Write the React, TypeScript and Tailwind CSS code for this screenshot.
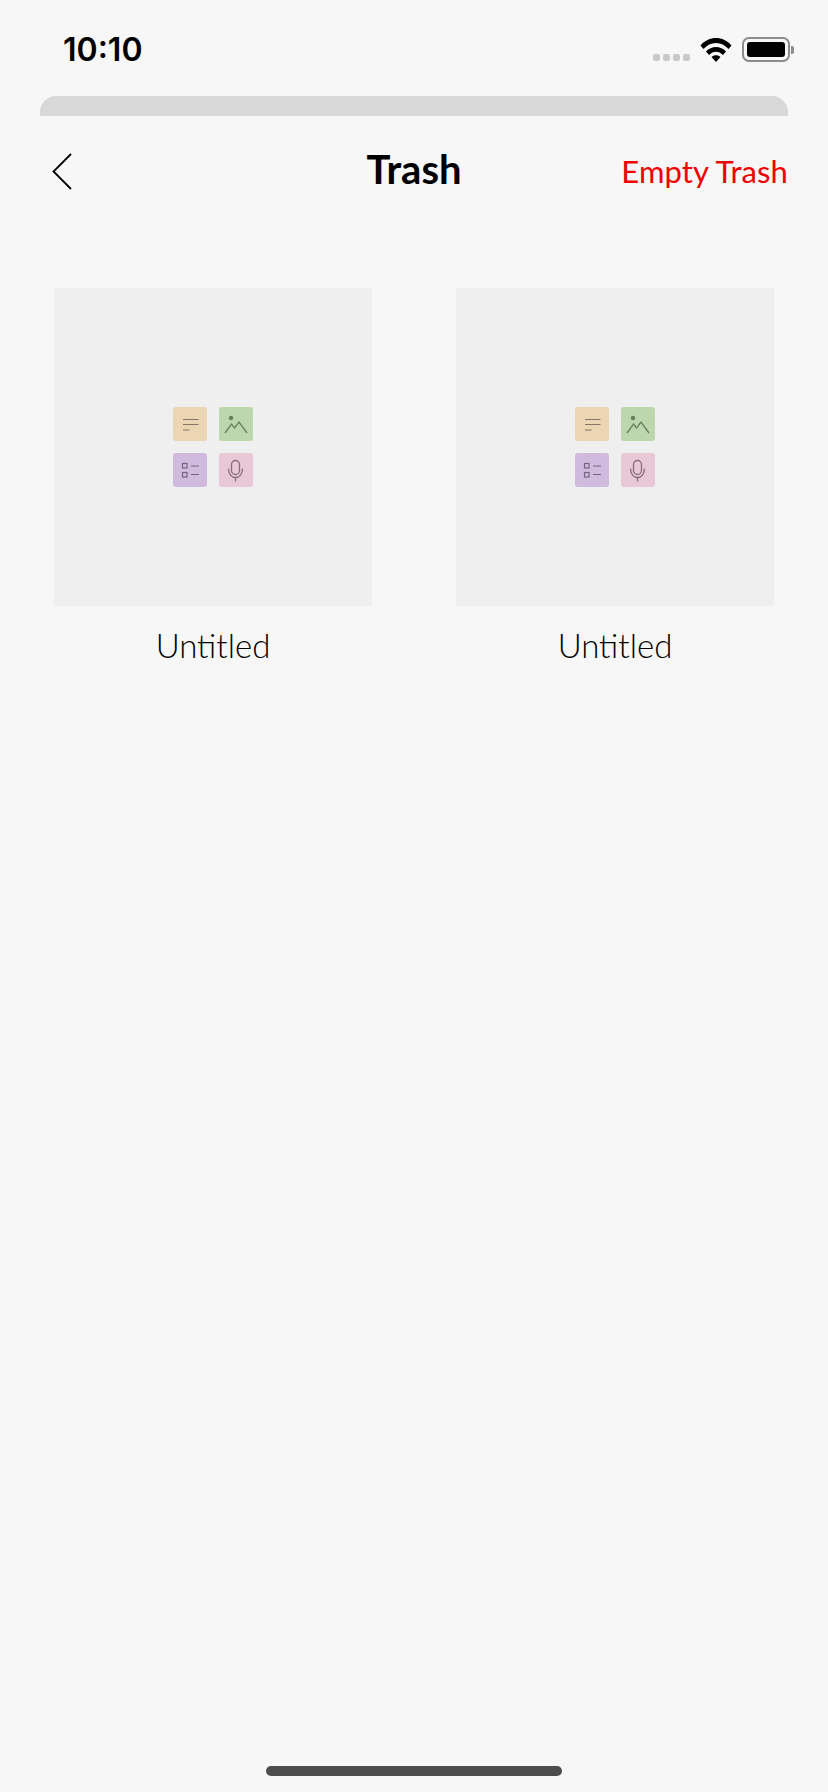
import React from 'react'

function NoteTile() {
  return (
    <div className="w-[34px] h-[34px] rounded-[3px] bg-[#ebd5b3] flex items-center justify-center">
      <svg width="34" height="34" viewBox="0 0 34 34" fill="none" stroke="#857663" strokeWidth="1.2">
        <path d="M10 12.500h15.500M10 17.500h15.500M10 23h6.500" />
      </svg>
    </div>
  )
}

function ImageTile() {
  return (
    <div className="w-[34px] h-[34px] rounded-[3px] bg-[#bcd6ad] flex items-center justify-center">
      <svg width="34" height="34" viewBox="0 0 34 34" fill="none" stroke="#65805d" strokeWidth="1.3">
        <circle cx="12" cy="11" r="2.200" fill="#65805d" stroke="none" />
        <path d="M6 26l6.500-9 3 4 4.500-6 8 11" />
      </svg>
    </div>
  )
}

function ListTile() {
  return (
    <div className="w-[34px] h-[34px] rounded-[3px] bg-[#d0bade] flex items-center justify-center">
      <svg width="34" height="34" viewBox="0 0 34 34" fill="none" stroke="#75667f" strokeWidth="1.200">
        <rect x="9.500" y="10.500" width="4.500" height="4.500" />
        <rect x="9.500" y="19.500" width="4.500" height="4.500" />
        <path d="M18 13h8M18 21.500h8" />
      </svg>
    </div>
  )
}

function MicTile() {
  return (
    <div className="w-[34px] h-[34px] rounded-[3px] bg-[#e8c8d6] flex items-center justify-center">
      <svg width="34" height="34" viewBox="0 0 34 34" fill="none" stroke="#876e7a" strokeWidth="1.300">
        <rect x="12.500" y="7.500" width="8" height="14" rx="4" />
        <path d="M9.500 15.500c0 5.500 3 9 7 9s7-3.500 7-9M16.500 24.500v4" />
      </svg>
    </div>
  )
}

function TrashCard() {
  return (
    <div className="flex flex-col items-center">
      <div className="w-full h-[318px] bg-[#efefef] flex items-center justify-center">
        <div className="grid grid-cols-[34px_34px] gap-x-[12px] gap-y-[12px]">
          <NoteTile />
          <ImageTile />
          <ListTile />
          <MicTile />
        </div>
      </div>
      <div className="mt-[19px] text-[33px] leading-[40px] font-light text-black">Untitled</div>
    </div>
  )
}

export default function App() {
  return (
    <div className="w-[828px] h-[1792px] bg-[#f7f7f7] flex flex-col overflow-hidden font-['Lato',sans-serif]">
      <div className="h-[96px] flex justify-between pl-[63px] pr-[34px] pt-[28px]">
        <div className="font-['Inter',sans-serif] text-[32px] leading-[44px] font-semibold text-black">10:10</div>
        <div className="flex items-start gap-[10px] pt-[9px]">
          <div className="flex gap-[3px] mt-[17px]">
            <div className="w-[7px] h-[7px] rounded-[2px] bg-[#c9c9c9]" />
            <div className="w-[7px] h-[7px] rounded-[2px] bg-[#c9c9c9]" />
            <div className="w-[7px] h-[7px] rounded-[2px] bg-[#c9c9c9]" />
            <div className="w-[7px] h-[7px] rounded-[2px] bg-[#c9c9c9]" />
          </div>
          <svg width="32" height="25" viewBox="0 0 32 25">
            <path d="M0.500 8.500C8.500 -1.500 23.500 -1.500 31.500 8.500L28.500 12C22 4 10 4 3.500 12Z" />
            <path d="M6 14.500C11 8.500 21 8.500 26 14.500L23 18C19 13.500 13 13.500 9 18Z" />
            <path d="M11.500 20C14 17.500 18 17.500 20.500 20L16 25Z" />
          </svg>
          <div className="flex items-center">
            <div className="w-[48px] h-[25px] rounded-[7px] border-2 border-[#8c8c8c] p-[3px]">
              <div className="w-full h-full rounded-[3px] bg-black" />
            </div>
            <div className="w-[3px] h-[8px] rounded-r-[2px] bg-[#8c8c8c] ml-[1px]" />
          </div>
        </div>
      </div>

      <div className="mx-[40px] h-[20px] rounded-t-[16px] bg-[#d8d8d8] shrink-0" />

      <div className="h-[110px] flex items-center relative pl-[52px] pr-[40px] justify-between">
        <svg width="20" height="37" viewBox="0 0 20 37" fill="none" stroke="black" strokeWidth="1.800">
          <path d="M19 1L1.500 18.500L19 36" />
        </svg>
        <div className="text-[40px] leading-[46px] font-bold text-black absolute left-0 right-0 text-center pb-[4px]">Trash</div>
        <div className="text-[31px] leading-[36px] tracking-[0.1px] text-[#f00000]">Empty Trash</div>
      </div>

      <div className="grid grid-cols-[318px_318px] gap-x-[84px] pl-[54px] mt-[62px]">
        <TrashCard />
        <TrashCard />
      </div>

      <div className="mt-auto mb-[16px] self-center w-[296px] h-[10px] rounded-full bg-[#4d4d4d]" />
    </div>
  )
}
